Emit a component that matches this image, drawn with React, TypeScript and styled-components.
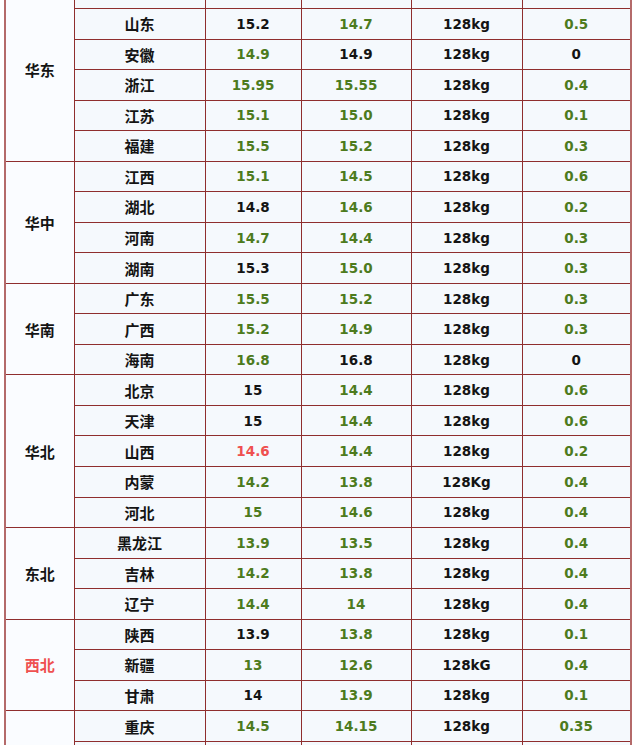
import styled, { createGlobalStyle } from 'styled-components';

type Tone = 'k' | 'g' | 'r';
type Cell = [string, Tone];
type Row = [string, Cell, Cell, string, Cell];
type Group = { region: string; hot?: boolean; rows: Row[] };

// first row of 华东 sits above the visible area, so it is left blank
const blank: Row = ["", ["", 'k'], ["", 'k'], "", ["", 'k']];

const groups: Group[] = [
    {
        region: "华东",
        rows: [
            blank,
            ["山东", ["15.2", 'k'], ["14.7", 'g'], "128kg", ["0.5", 'g']],
            ["安徽", ["14.9", 'g'], ["14.9", 'k'], "128kg", ["0", 'k']],
            ["浙江", ["15.95", 'g'], ["15.55", 'g'], "128kg", ["0.4", 'g']],
            ["江苏", ["15.1", 'g'], ["15.0", 'g'], "128kg", ["0.1", 'g']],
            ["福建", ["15.5", 'g'], ["15.2", 'g'], "128kg", ["0.3", 'g']],
        ]
    },
    {
        region: "华中",
        rows: [
            ["江西", ["15.1", 'g'], ["14.5", 'g'], "128kg", ["0.6", 'g']],
            ["湖北", ["14.8", 'k'], ["14.6", 'g'], "128kg", ["0.2", 'g']],
            ["河南", ["14.7", 'g'], ["14.4", 'g'], "128kg", ["0.3", 'g']],
            ["湖南", ["15.3", 'k'], ["15.0", 'g'], "128kg", ["0.3", 'g']],
        ]
    },
    {
        region: "华南",
        rows: [
            ["广东", ["15.5", 'g'], ["15.2", 'g'], "128kg", ["0.3", 'g']],
            ["广西", ["15.2", 'g'], ["14.9", 'g'], "128kg", ["0.3", 'g']],
            ["海南", ["16.8", 'g'], ["16.8", 'k'], "128kg", ["0", 'k']],
        ]
    },
    {
        region: "华北",
        rows: [
            ["北京", ["15", 'k'], ["14.4", 'g'], "128kg", ["0.6", 'g']],
            ["天津", ["15", 'k'], ["14.4", 'g'], "128kg", ["0.6", 'g']],
            ["山西", ["14.6", 'r'], ["14.4", 'g'], "128kg", ["0.2", 'g']],
            ["内蒙", ["14.2", 'g'], ["13.8", 'g'], "128Kg", ["0.4", 'g']],
            ["河北", ["15", 'g'], ["14.6", 'g'], "128kg", ["0.4", 'g']],
        ]
    },
    {
        region: "东北",
        rows: [
            ["黑龙江", ["13.9", 'g'], ["13.5", 'g'], "128kg", ["0.4", 'g']],
            ["吉林", ["14.2", 'g'], ["13.8", 'g'], "128kg", ["0.4", 'g']],
            ["辽宁", ["14.4", 'g'], ["14", 'g'], "128kg", ["0.4", 'g']],
        ]
    },
    {
        region: "西北",
        hot: true,
        rows: [
            ["陕西", ["13.9", 'k'], ["13.8", 'g'], "128kg", ["0.1", 'g']],
            ["新疆", ["13", 'g'], ["12.6", 'g'], "128kG", ["0.4", 'g']],
            ["甘肃", ["14", 'k'], ["13.9", 'g'], "128kg", ["0.1", 'g']],
        ]
    },
    {
        // only the top of this group is on screen
        region: "",
        rows: [
            ["重庆", ["14.5", 'g'], ["14.15", 'g'], "128kg", ["0.35", 'g']],
            blank,
            blank,
            blank,
        ]
    },
];

const toneColor: Record<Tone, string> = {
    k: "#141414",
    g: "#4d7b1d",
    r: "#ef5050",
};

const widths = [69, 131, 96, 110, 111, 109];

const App = () => {
    return (
        <>
            <Global />
            <Frame>
                <Table>
                    <colgroup>
                        {widths.map((w, i) => <Col key={i} $w={w} />)}
                    </colgroup>
                    <tbody>
                        {groups.map((group, gi) =>
                            group.rows.map((row, i) => (
                                <tr key={gi + "-" + i}>
                                    {i === 0 && (
                                        <RegionCell rowSpan={group.rows.length} $hot={group.hot}>
                                            {group.region}
                                        </RegionCell>
                                    )}
                                    <NameCell>{row[0]}</NameCell>
                                    <NumCell $tone={row[1][1]}>{row[1][0]}</NumCell>
                                    <NumCell $tone={row[2][1]}>{row[2][0]}</NumCell>
                                    <NumCell $tone="k">{row[3]}</NumCell>
                                    <NumCell $tone={row[4][1]}>{row[4][0]}</NumCell>
                                </tr>
                            ))
                        )}
                    </tbody>
                </Table>
            </Frame>
        </>
    );
}

export default App;

const Global = createGlobalStyle`
    html, body {
        margin: 0;
        padding: 0;
        background: #ffffff;
    }
`

const Frame = styled.div`
    width: 640px;
    height: 745px;
    overflow: hidden;
    padding-left: 4px;
    box-sizing: border-box;
`

const Col = styled.col<{ $w: number }>`
    width: ${p => p.$w}px;
`

const Table = styled.table`
    margin-top: -23px;
    width: 628px;
    table-layout: fixed;
    border-collapse: collapse;
    border: 2px solid #b46a6a;
    tr {
        height: 30.54px;
    }
    td {
        border: 1px solid #8f2e2e;
        padding: 0;
        text-align: center;
        vertical-align: middle;
        background: #f5f9fd;
    }
`

const RegionCell = styled.td<{ $hot?: boolean }>`
    && {
        background: #fafcff;
    }
    font-family: "Noto Sans CJK SC", sans-serif;
    font-weight: 700;
    font-size: 15px;
    color: ${p => (p.$hot ? "#ef5050" : "#141414")};
`

const NameCell = styled.td`
    font-family: "Noto Sans CJK SC", sans-serif;
    font-weight: 700;
    font-size: 15px;
    color: #141414;
`

const NumCell = styled.td<{ $tone: Tone }>`
    font-family: "DejaVu Sans", sans-serif;
    font-weight: 700;
    font-size: 13.5px;
    color: ${p => toneColor[p.$tone]};
`
